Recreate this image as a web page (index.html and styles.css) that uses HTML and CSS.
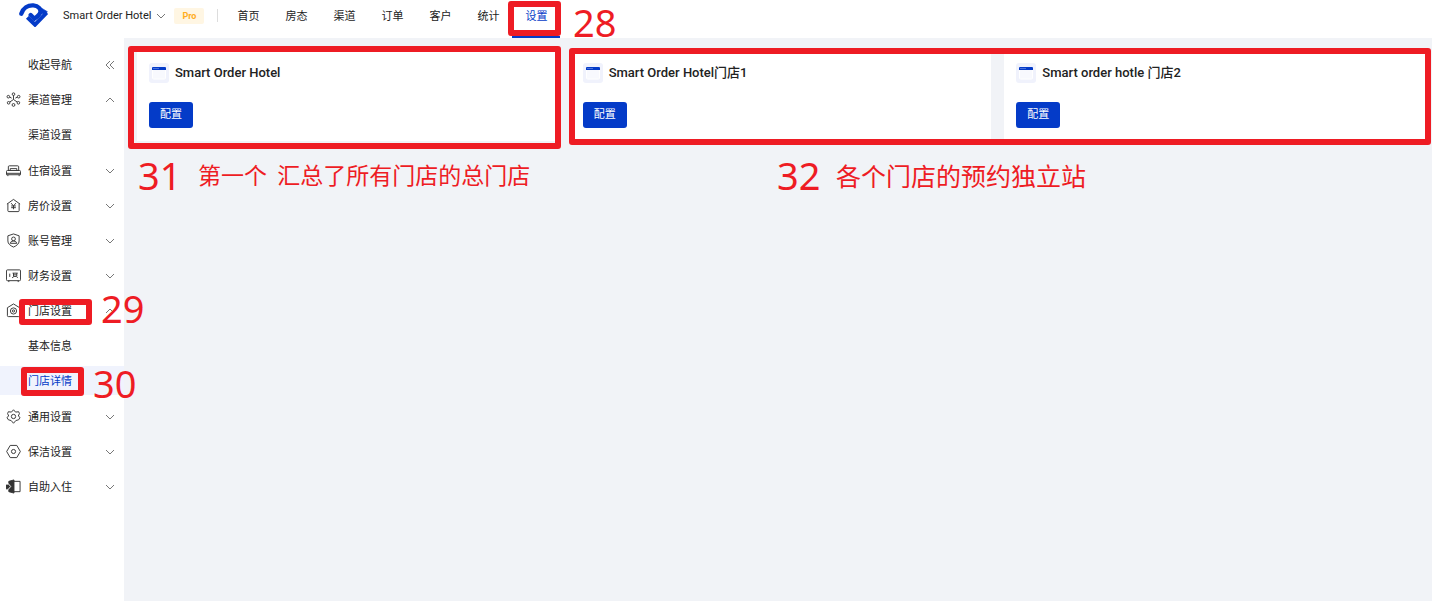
FILE: index.html
```html
<!DOCTYPE html>
<html lang="zh-CN">
<head>
<meta charset="utf-8">
<title>Smart Order Hotel</title>
<link rel="stylesheet" href="styles.css">
</head>
<body>
<svg class="sprite" aria-hidden="true">
  <symbol id="down" viewBox="0 0 10 10"><path d="M1 3l4 4 4-4"/></symbol>
  <symbol id="up" viewBox="0 0 10 10"><path d="M1 7l4-4 4 4"/></symbol>
  <symbol id="window" viewBox="0 0 20 20"><rect width="20" height="20" rx="3" fill="#f0f2fc"/><rect x="3.500" y="4.500" width="13" height="11.500" rx="1" fill="#f8f9fe" stroke="#fff"/><path d="M3 7V5q0-1 1-1h12q1 0 1 1v2z" fill="#043bc8"/><path d="M4.500 5.500h1M6.500 5.500h1M8.500 5.500h1" stroke="#8fa9ec"/></symbol>
</svg>
<header class="header">
  <svg class="logo" viewBox="57 9 90 72" role="img" aria-label="Logo">
    <path d="M64 41C69 24 84 15 100 16C116 17 123 28 121 37C119 46 112 50 103 56L92 45" stroke-width="13" stroke-linecap="round"/>
    <path d="M82 52L105 74L140 38" stroke-width="12"/>
    <path d="M119 21L142 35L134 45L119 36z" fill="#043bc8" stroke-width="2"/>
  </svg>
  <button class="hotel" type="button">Smart Order Hotel <svg class="chevron"><use href="#down"/></svg></button>
  <span class="pro">Pro</span>
  <nav class="nav">
    <a href="#">首页</a><a href="#">房态</a><a href="#">渠道</a><a href="#">订单</a><a href="#">客户</a><a href="#">统计</a><a class="current" href="#">设置</a>
  </nav>
</header>
<div class="layout">
  <aside class="sidebar">
    <button class="row collapse" type="button"><span class="label">收起导航</span><svg class="chevron" viewBox="0 0 10 10"><path d="M5 1L1 5l4 4M9 1L5 5l4 4"/></svg></button>
    <button class="row" type="button"><svg class="icon" viewBox="0 0 16 16"><circle cx="8" cy="2.300" r="1.400"/><circle cx="2.500" cy="5" r="1.400"/><circle cx="13.500" cy="5" r="1.400"/><circle cx="2.800" cy="11.500" r="1.400"/><circle cx="13.200" cy="11.500" r="1.400"/><circle cx="8" cy="13.800" r="1.500"/><path d="M8 3.700V8M8 8l-4 2.700M8 8l4 2.700M4 5.500l2 1M12 5.500l-2 1"/></svg><span class="label">渠道管理</span><svg class="chevron"><use href="#up"/></svg></button>
    <div class="sub"><a class="row" href="#"><span class="label">渠道设置</span></a></div>
    <button class="row" type="button"><svg class="icon" viewBox="0 0 16 16"><path d="M2.500 8V4q0-1 1-1h9q1 0 1 1v4M.5 12.500V9q0-1 1-1h13q1 0 1 1v3.500zM.5 11h15M4.500 8V6h7v2M2 12.500V14M14 12.500V14"/></svg><span class="label">住宿设置</span><svg class="chevron"><use href="#down"/></svg></button>
    <button class="row" type="button"><svg class="icon" viewBox="0 0 16 16"><path d="M1 6.500l7-5 7 5M2 6v7.500q0 1 1 1h10q1 0 1-1V6M5.500 5.500L8 8.500l2.500-3M8 8.500V12M5.500 8.500h5M5.500 10.300h5"/></svg><span class="label">房价设置</span><svg class="chevron"><use href="#down"/></svg></button>
    <button class="row" type="button"><svg class="icon" viewBox="0 0 16 16"><path d="M8 1l6 2v5.500c0 3-2.500 5-6 6.500-3.500-1.500-6-3.500-6-6.500V3z"/><circle cx="8" cy="6.300" r="2"/><path d="M4.500 11q.5-2.500 3.500-2.500t3.500 2.500z"/></svg><span class="label">账号管理</span><svg class="chevron"><use href="#down"/></svg></button>
    <button class="row" type="button"><svg class="icon" viewBox="0 0 16 16"><rect x=".5" y="2" width="15" height="11.500" rx="1"/><path d="M3 13.500V15M13 13.500V15M4 6v3.500M7 5.500h5.500M8 5.500V9M11.500 5.500V9M8 7.300h3.500M6.500 10.500L8.500 9h2.500l1.500 1.500"/></svg><span class="label">财务设置</span><svg class="chevron"><use href="#down"/></svg></button>
    <button class="row" type="button"><svg class="icon" viewBox="0 0 16 16"><path d="M8 1l6.500 4v8.500q0 1-1 1h-11q-1 0-1-1V5z"/><circle cx="8" cy="8.500" r="3.300"/><circle cx="8" cy="8.500" r="1.200"/></svg><span class="label">门店设置</span><svg class="chevron"><use href="#up"/></svg></button>
    <div class="sub"><a class="row" href="#"><span class="label">基本信息</span></a><a class="row current" href="#"><span class="label">门店详情</span></a></div>
    <button class="row" type="button"><svg class="icon" viewBox="0 0 16 16"><path d="M8 .8l2.200 2.500 3.300-.4.800 2-1.200 2.600L15 9l-1.500 2.500-3 .8L8 15.200l-2.500-2.900-3-.8L1 9l1.900-1.500-1.200-2.600.8-2 3.300.4z"/><circle cx="8" cy="8" r="2.300"/></svg><span class="label">通用设置</span><svg class="chevron"><use href="#down"/></svg></button>
    <button class="row" type="button"><svg class="icon" viewBox="0 0 16 16"><path d="M4.500 1.500h7L15.300 8l-3.800 6.500h-7L.7 8z"/><circle cx="8" cy="8" r="2.200"/></svg><span class="label">保洁设置</span><svg class="chevron"><use href="#down"/></svg></button>
    <button class="row" type="button"><svg class="icon" viewBox="0 0 16 16"><path d="M3 2.500L8.500 1v14L3 13.500v-3H0v-4h3z" fill="#333"/><path d="M8.500 2.500H15v11H8.500"/><path d="M2 4.500l3 3.500-3 3.500" stroke="#fff"/></svg><span class="label">自助入住</span><svg class="chevron"><use href="#down"/></svg></button>
  </aside>
  <main class="cards">
    <section class="card"><h2><svg><use href="#window"/></svg>Smart Order Hotel</h2><button type="button">配置</button></section>
    <section class="card"><h2><svg><use href="#window"/></svg>Smart Order Hotel门店1</h2><button type="button">配置</button></section>
    <section class="card"><h2><svg><use href="#window"/></svg>Smart order hotle 门店2</h2><button type="button">配置</button></section>
  </main>
</div>
<div class="marks">
  <div class="box b28"></div><span class="num n28">28</span>
  <div class="box b29"></div><span class="num n29">29</span>
  <div class="box b30"></div><span class="num n30">30</span>
  <div class="box b31"></div><span class="num n31">31</span><p class="note t31">第一个&nbsp; 汇总了所有门店的总门店</p>
  <div class="box b32"></div><span class="num n32">32</span><p class="note t32">各个门店的预约独立站</p>
</div>
</body>
</html>
```
FILE: styles.css
```css
* { box-sizing: border-box; }
body {
  margin: 0;
  min-height: 100vh;
  display: flex;
  flex-direction: column;
  position: relative;
  background: #fff;
  color: #222;
  font: 11px/16px Roboto, "Noto Sans CJK SC", sans-serif;
}
a { color: inherit; text-decoration: none; }
button { font: inherit; color: inherit; border: 0; background: none; padding: 0; cursor: pointer; }
svg { flex: none; fill: none; stroke: #333; }
.sprite { position: absolute; width: 0; height: 0; }
.chevron { width: 10px; height: 10px; stroke: #777; }

.header { height: 38px; display: flex; padding-left: 19px; }
.logo { width: 30px; height: 24px; margin-top: 3px; stroke: #043bc8; }
.hotel { display: flex; align-items: center; gap: 5px; height: 32px; margin-left: 14px; }
.pro {
  height: 16px;
  margin: 8px 13px 0 8px;
  padding: 0 8px;
  border-radius: 2px;
  background: #fff6e3;
  color: #ffad1f;
  font-size: 9px;
  font-weight: 700;
}
.nav { display: flex; padding-left: 7px; background: linear-gradient(#ddd, #ddd) 0 9px / 1px 13px no-repeat; }
.nav a { width: 48px; padding-top: 9px; text-align: center; border-bottom: 2px solid transparent; }
.nav .current { color: #043bc8; border-color: #043bc8; }

.layout { flex: 1; display: flex; }
.sidebar { width: 124px; padding-top: 9px; }
.row {
  display: flex;
  align-items: center;
  width: 100%;
  height: 29px;
  margin: 3px 0 0;
  padding: 0 9px 0 6px;
  text-align: left;
}
.icon { width: 15px; height: 15px; margin-right: 7px; }
.label { flex: 1; padding-top: 3px; }
.collapse { margin-bottom: 1px; padding-left: 28px; }
.sub { display: flow-root; padding-bottom: 1px; }
.sub .row { padding-left: 28px; }
.sub .current { background: #f0f3fd; color: #043bc8; }
.row + .row, .sub + .row, .sub .row { margin-top: 6px; }

.cards {
  flex: 1;
  display: grid;
  grid-template-columns: repeat(3, 1fr);
  align-items: start;
  gap: 13px;
  padding: 13px 7px 13px 13px;
  background: #f1f3f7;
}
.card { padding: 12px 12px 13px; background: #fff; }
.card h2 { display: flex; align-items: center; height: 20px; margin: 0 0 19px; font-size: 13px; font-weight: 500; white-space: pre; }
.card svg { width: 20px; height: 20px; margin-right: 6px; stroke: none; }
.card button { display: block; width: 44px; height: 26px; border-radius: 3px; background: #043bc8; color: #fff; }

.marks { position: absolute; inset: 0; pointer-events: none; color: #ee1c24; font-family: "Noto Sans", "Noto Sans CJK SC", sans-serif; }
.box, .num, .note { position: absolute; margin: 0; white-space: nowrap; }
.box { border: 6px solid #ee1c24; border-radius: 3px; }
.num { font-size: 38px; line-height: 44px; }
.note { font-family: "Noto Sans CJK SC", sans-serif; line-height: 40px; }
.b28 { left: 508px; top: 1px; width: 53px; height: 35px; }
.b29 { left: 19px; top: 299px; width: 73px; height: 26px; }
.b30 { left: 21px; top: 367px; width: 63px; height: 29px; }
.b31 { left: 128px; top: 46px; width: 433px; height: 103px; }
.b32 { left: 569px; right: 1px; top: 48px; height: 97px; }
.n28 { left: 573px; top: 0; }
.n29 { left: 101px; top: 286px; }
.n30 { left: 93px; top: 361px; }
.n31 { left: 138px; top: 153px; }
.n32 { left: 777px; top: 153px; }
.t31 { left: 198px; top: 154px; font-size: 23px; }
.t32 { left: 836px; top: 155px; font-size: 25px; }
```
